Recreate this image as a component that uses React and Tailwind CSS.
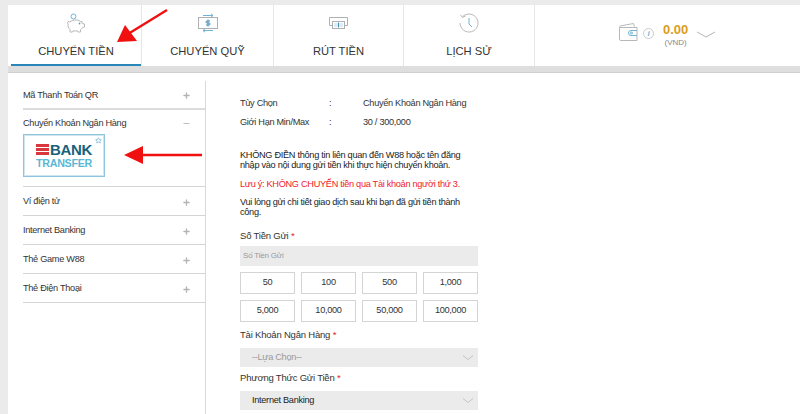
import React from 'react';
import { Plus, Minus } from 'lucide-react';

function PiggyIcon() {
  return (
    <svg width="20" height="20" viewBox="0 0 20 20" fill="none" stroke="#b8b8b8" strokeWidth="1">
      <path d="M2 8.500c1 .5 1.500.5 2 .3C5.500 7.500 7.500 7 10 7c2.500 0 4 .8 5 2l1-.5.2 2 2.300.5v3l-2 .5c-.5 1-1.200 1.700-2 2.200V19h-2.500l-.5-1.200c-1.500.3-3 .3-4.500 0L6.500 19H4v-2.500C2.500 15 1.500 13 2.200 11 1.500 10.500 1.500 9.500 2 8.500z" />
      <circle cx="7.500" cy="3.500" r="2.500" stroke="#6fb3d6" />
      <circle cx="13.500" cy="10.500" r="0.9" fill="#5aa5cf" stroke="none" />
    </svg>
  );
}

function TransferIcon() {
  return (
    <svg width="20" height="20" viewBox="0 0 20 20" fill="none" stroke="#b0b0b0" strokeWidth="1">
      <rect x="0.500" y="4.500" width="19" height="11" />
      <path d="M5 2.500h10M13 .8l2 1.700-2 1.700M15 17.500H5M7 15.800l-2 1.700 2 1.700" stroke="#6fb3d6" />
      <path d="M10 6.500v7M12 8H9a1 1 0 0 0 0 2h2a1 1 0 0 1 0 2H8" stroke="#4a90b8" />
    </svg>
  );
}

function WithdrawIcon() {
  return (
    <svg width="19" height="12" viewBox="0 0 19 12" fill="none" stroke="#b0b0b0" strokeWidth="1">
      <path d="M3 8.500H.5V.5h18v8H16" />
      <rect x="3.500" y="4.500" width="12" height="7" />
      <rect x="5" y="6" width="9" height="4" fill="#dcebf4" stroke="none" />
      <path d="M9.500 5.500v5" stroke="#4a90b8" />
    </svg>
  );
}

function HistoryIcon() {
  return (
    <svg width="20" height="20" viewBox="0 0 20 20" fill="none" stroke="#b8b8b8" strokeWidth="1">
      <path d="M3.500 3.800A9 9 0 1 1 1 10" />
      <path d="M1.500 2l2 2.500L6.500 3" />
      <path d="M10 5v6l3 3" stroke="#6fb3d6" />
    </svg>
  );
}

function WalletIcon() {
  return (
    <svg width="19" height="18" viewBox="0 0 19 18" fill="none" stroke="#b8b8b8" strokeWidth="1">
      <path d="M.500 4.500C.500 3.500 1 3 2 2.800L14.500.5l1 3" />
      <path d="M.500 4.500h17.500v13H2a1.500 1.500 0 0 1-1.500-1.500z" />
      <path d="M18 7.500h-6a2.500 2.500 0 0 0 0 5h6" stroke="#6fb3d6" />
      <circle cx="12.500" cy="10" r="1" stroke="#6fb3d6" />
    </svg>
  );
}

function BankLogo() {
  return (
    <div className="relative flex h-[43px] w-[82px] flex-col items-center justify-center border border-[#8fc4de] bg-white shadow-[inset_0_0_0_1px_#cfe5f0]">
      <div className="flex h-[14px] items-center gap-[1px]">
        <div className="flex flex-col gap-[1.500px]">
          <div className="h-[2.500px] w-[13px] bg-[#d9363e]" />
          <div className="h-[2.500px] w-[13px] bg-[#d9363e]" />
          <div className="h-[2.500px] w-[13px] bg-[#d9363e]" />
        </div>
        <span className="text-[15px] leading-[14px] font-bold text-[#17627d]">BANK</span>
      </div>
      <span className="text-[10.700px] leading-[12px] font-bold text-[#5bb8d4]">TRANSFER</span>
      <svg className="absolute top-[2px] right-[2px]" width="7" height="7" viewBox="0 0 10 10" fill="none" stroke="#8fc4de" strokeWidth="1.300">
        <path d="M5 1l1.200 2.600 2.800.3-2.100 1.900.6 2.800L5 7.200 2.500 8.600l.6-2.800L1 3.900l2.800-.3z" />
      </svg>
    </div>
  );
}

function Arrow({ d, tip }) {
  return (
    <svg className="absolute top-0 left-0" width="800" height="414" fill="none">
      <path d={d} stroke="#f01010" strokeWidth="2.500" />
      <polygon points={tip} fill="#f01010" />
    </svg>
  );
}

const tabs = [
  { label: 'CHUYỂN TIỀN', w: 'ml-[3px] w-[131px]', icon: <PiggyIcon />, active: true },
  { label: 'CHUYỂN QUỸ', w: 'w-[132px]', icon: <TransferIcon /> },
  { label: 'RÚT TIỀN', w: 'w-[130px]', icon: <WithdrawIcon /> },
  { label: 'LỊCH SỬ', w: 'w-[131px]', icon: <HistoryIcon /> },
];

const methods = ['Ví điện tử', 'Internet Banking', 'Thẻ Game W88', 'Thẻ Điện Thoại'];
const amounts = ['50', '100', '500', '1,000', '5,000', '10,000', '50,000', '100,000'];

function MenuRow({ label, open, height }) {
  return (
    <div className={`flex items-center justify-between pr-[14px] ${height}`}>
      <span>{label}</span>
      {open ? <Minus size={9} color="#aaa" /> : <Plus size={9} color="#b4b4b4" strokeWidth={3.500} />}
    </div>
  );
}

function FieldLabel({ children }) {
  return (
    <div className="text-[9.500px] leading-[14px] tracking-[-0.2px] text-[#333]">
      {children} <span className="text-[#e0242c]">*</span>
    </div>
  );
}

function SelectBox({ value, muted }) {
  return (
    <div className={`flex h-[19px] items-center justify-between bg-[#ebebeb] pr-[5px] pl-[12px] ${muted ? 'text-[#999]' : 'text-[#222]'}`}>
      <span>{value}</span>
      <svg width="10" height="5" viewBox="0 0 10 5" fill="none" stroke="#c4c4c4">
        <path d="M0 .5l5 4 5-4" />
      </svg>
    </div>
  );
}

export default function App() {
  return (
    <div className="relative h-[414px] w-[800px] overflow-hidden bg-[#ebebeb] pt-[5px] pl-[8px] font-['Liberation_Sans',sans-serif]">
      {/* top tabs */}
      <div className="flex h-[61px] bg-white">
        {tabs.map((t) => (
          <div
            key={t.label}
            className={`flex flex-col items-center border-r border-[#e6e6e6] ${t.w} ${t.active ? 'shadow-[inset_0_-2px_0_#2a86b8]' : ''}`}
          >
            <div className="flex h-[36px] items-center">{t.icon}</div>
            <div className="mt-[2px] text-[11.200px] leading-[16px] text-[#333]">{t.label}</div>
          </div>
        ))}
        <div className="flex flex-1 items-start pt-[18px] pl-[84px]">
          <WalletIcon />
          <div className="mt-[5px] ml-[5px] flex h-[11px] w-[11px] items-center justify-center rounded-full border border-[#ccc] text-[8px] font-bold text-[#6fb3d6] italic">i</div>
          <div className="mt-[-1px] ml-[9px] flex flex-col items-center">
            <span className="text-[13px] leading-[15px] font-bold text-[#dc9c1c]">0.00</span>
            <span className="mt-[1px] text-[8px] leading-[10px] text-[#888]">(VND)</span>
          </div>
          <svg className="mt-[8px] ml-[8px]" width="20" height="7" viewBox="0 0 20 7" fill="none" stroke="#b5b5b5">
            <path d="M1 1l9 5 9-5" />
          </svg>
        </div>
      </div>
      <div className="h-[7px] border-b border-[#d0d0d0] bg-[#dedede]" />

      {/* content */}
      <div className="flex h-[341px] bg-white pt-[8px] pl-[15px]">
        <div className="h-[333px] w-[183px] border-r border-[#d9d9d9] text-[9.200px] tracking-[-0.3px] text-[#333]">
          <div className="border-b-2 border-[#dcdcdc]">
            <MenuRow label="Mã Thanh Toán QR" height="h-[27px] pt-[2px]" />
          </div>
          <div className="border-b border-[#d4d4d4] pb-[9px]">
            <MenuRow label="Chuyển Khoản Ngân Hàng" open height="h-[24px] pt-[3px]" />
            <BankLogo />
          </div>
          {methods.map((m) => (
            <div key={m} className="border-b border-[#d4d4d4]">
              <MenuRow label={m} height="h-[28px] pt-[2px]" />
            </div>
          ))}
        </div>

        <div className="ml-[34px] w-[238px] pt-[13px] text-[9.200px] tracking-[-0.3px] text-[#333]">
          <div className="flex h-[19px] items-center">
            <span className="w-[89px]">Tùy Chọn</span>
            <span className="w-[34px]">:</span>
            <span>Chuyển Khoản Ngân Hàng</span>
          </div>
          <div className="flex h-[19px] items-center">
            <span className="w-[89px]">Giới Hạn Min/Max</span>
            <span className="w-[34px]">:</span>
            <span>30 / 300,000</span>
          </div>
          <p className="mt-[18px] leading-[10px] text-[#222]">
            KHÔNG ĐIỀN thông tin liên quan đến W88 hoặc tên đăng nhập vào nội dung gửi tiền khi thực hiện chuyển khoản.
          </p>
          <p className="mt-[9px] leading-[10px] whitespace-nowrap text-[#f0202c]">
            Lưu ý: KHÔNG CHUYỂN tiền qua Tài khoản người thứ 3.
          </p>
          <p className="mt-[8px] leading-[10px] text-[#222]">
            Vui lòng gửi chi tiết giao dịch sau khi bạn đã gửi tiền thành công.
          </p>
          <div className="mt-[12px]">
            <FieldLabel>Số Tiền Gửi</FieldLabel>
          </div>
          <div className="mt-[3px] flex h-[20px] items-center bg-[#ebebeb] pl-[3px] text-[8px] tracking-[-0.2px] text-[#999]">Số Tiền Gửi</div>
          <div className="mt-[6px] grid grid-cols-4 gap-[6px]">
            {amounts.map((a) => (
              <div key={a} className="flex h-[22px] items-center justify-center border border-[#d4d4d4] text-[#333]">
                {a}
              </div>
            ))}
          </div>
          <div className="mt-[6px]">
            <FieldLabel>Tài Khoản Ngân Hàng</FieldLabel>
          </div>
          <div className="mt-[6px]">
            <SelectBox value="--Lựa Chọn--" muted />
          </div>
          <div className="mt-[4px]">
            <FieldLabel>Phương Thức Gửi Tiền</FieldLabel>
          </div>
          <div className="mt-[6px]">
            <SelectBox value="Internet Banking" />
          </div>
        </div>
      </div>

      <Arrow d="M167 10 L128 34" tip="117,42 137,41 125,25" />
      <Arrow d="M202 155 L142 155" tip="124,155 143,146 143,164" />
    </div>
  );
}
